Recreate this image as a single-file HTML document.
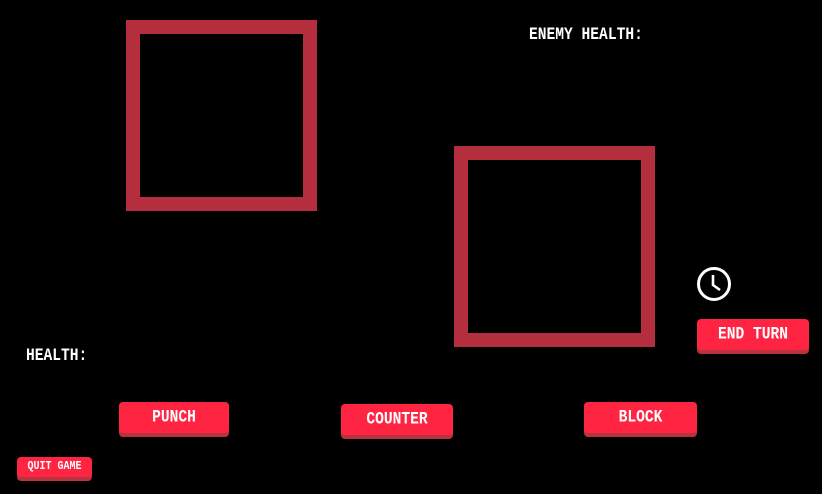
<!DOCTYPE html>
<html><head><style>
body{margin:0;width:822px;height:494px;background:#000;overflow:hidden;position:relative;font-family:"Liberation Mono",monospace;font-weight:bold;color:#fff}
.box{position:absolute;border:14px solid #b52e3e;box-sizing:border-box}
.t{position:absolute;font-size:14.6px;line-height:16px;transform:scaleY(1.2);transform-origin:left top;white-space:nowrap}
.b{position:absolute;background:#ff2442;border-radius:4px;box-shadow:0 4px 0 #b8333f;color:#fff;text-align:center;box-sizing:border-box}
.b span{display:inline-block;transform:scaleY(1.2);position:relative;top:1px}
</style></head><body>
<div class="box" style="left:126px;top:20px;width:191px;height:191px"></div>
<div class="box" style="left:454px;top:146px;width:201px;height:201px"></div>
<div class="t" style="left:529px;top:26px">ENEMY HEALTH:</div>
<div class="t" style="left:26px;top:347px">HEALTH:</div>
<svg style="position:absolute;left:696px;top:266px" width="36" height="36" viewBox="0 0 36 36"><circle cx="18" cy="18" r="15.5" fill="none" stroke="#fff" stroke-width="3"/><path d="M17 9v10l7 5" fill="none" stroke="#fff" stroke-width="2.6"/></svg>
<div class="b" style="left:697px;top:319px;width:112px;height:31px;line-height:31px;font-size:14.6px"><span>END TURN</span></div>
<div class="b" style="left:119px;top:402px;width:110px;height:31px;line-height:31px;font-size:14.6px"><span>PUNCH</span></div>
<div class="b" style="left:341px;top:404px;width:112px;height:31px;line-height:31px;font-size:14.6px"><span>COUNTER</span></div>
<div class="b" style="left:584px;top:402px;width:113px;height:31px;line-height:31px;font-size:14.6px"><span>BLOCK</span></div>
<div class="b" style="left:17px;top:457px;width:75px;height:20px;line-height:20px;font-size:10px"><span>QUIT GAME</span></div>
</body></html>
